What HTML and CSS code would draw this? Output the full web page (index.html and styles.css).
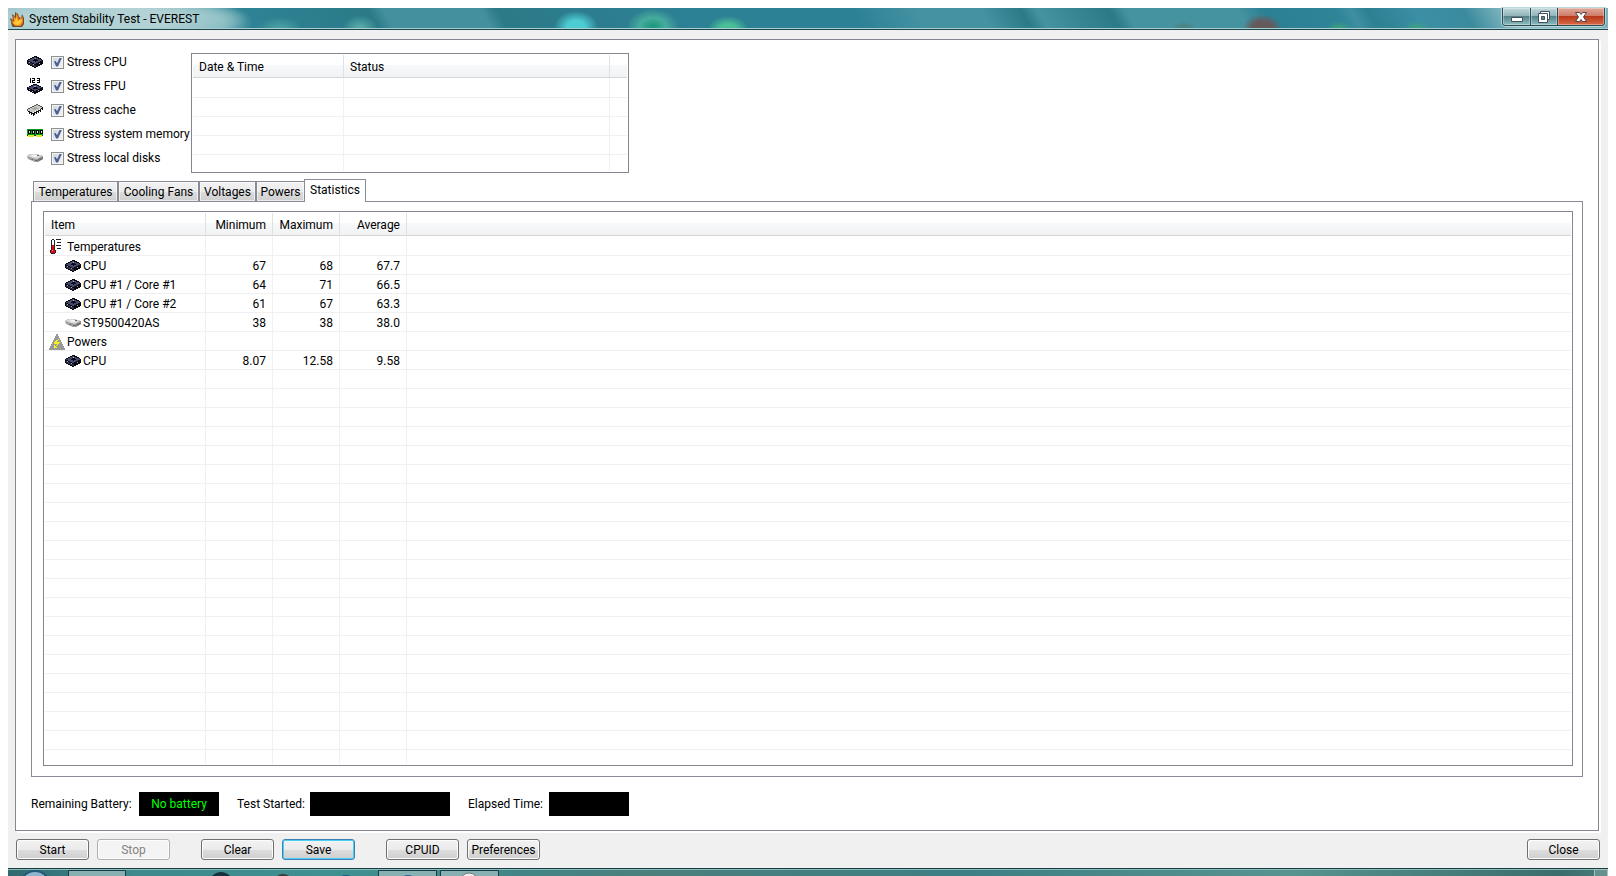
FILE: index.html
```
<!DOCTYPE html>
<html lang="en">
<head>
  <meta charset="UTF-8">
  <title>System Stability Test - EVEREST</title>
  <link rel="stylesheet" href="styles.css">
</head>
<body>

  <svg class="defs" aria-hidden="true">
    <symbol id="cpu" viewBox="0 0 16 16">
      <path fill="#08080e" d="M7 2h3v1h2v1h2v1h1v1h1v4h-1v1h-2v1h-2v1h-2v1H7v-1H5v-1H3v-1H1v-1H0V6h1V5h2V4h2V3h2z"/>
      <path fill="#46496e" d="M7 3h2v1h2v1h3v1h1v1h-2v1h-2v1H9v1H7V9H5V8H3V7H1V6h2V5h2V4h2z"/>
      <path fill="#2c2e4a" d="M1 8h2v1h2v1h2v1h2v2H7v-1H5v-1H3v-1H1z"/>
      <path fill="#08080e" d="M7 5h3v1h1v1H9v1H8V7H6V6h1z"/>
      <path fill="#a5a8c0" d="M8 4h1v1H8zM2 8h1v1H2zM6 10h1v1H6zM12 9h1v1h-1z"/>
    </symbol>
    <symbol id="fpu" viewBox="0 0 16 16">
      <path fill="#000" d="M3 0h1v5H3zM5 0h3v3H6v1h2v1H5V2h2V1H5zM10 0h3v5h-3V4h2V3h-2V2h2V1h-2z"/>
      <path fill="#08080e" d="M6 6h4v1h2v1h2v1h2v3h-1v1h-2v1h-2v1H9v1H7v-1H5v-1H3v-1H1v-1H0V9h2V8h2V7h2z"/>
      <path fill="#46496e" d="M6 7h4v1h2v1h3v1h-2v1h-2v1H9v1H7v-1H5v-1H3v-1H1V9h3V8h2z"/>
      <path fill="#08080e" d="M7 9h3v1h1v1H6v-1h1z"/>
      <path fill="#a5a8c0" d="M7 8h2v1H7zM2 11h1v1H2zM5 13h1v1H5zM11 12h1v1h-1z"/>
    </symbol>
    <symbol id="cache" viewBox="0 0 16 16">
      <path fill="#c8c8c4" d="M9 2h2v1h2v1h2v2h-1v1h-2v1h-2v1H8v1H6v1H4v-1H2V9H0V8h1V7h2V6h2V5h2V3h2z"/>
      <path fill="#555" d="M9 2h2v1H9zM7 3h2v1H7zM5 4h2v1H5zM3 5h2v1H3zM1 6h2v1H1zM0 7h1v2H0zM11 3h2v1h-2zM13 4h2v1h-2z"/>
      <path fill="#a8a8a4" d="M7 5h3v1h1v1H9v1H6V7H5V6h2z"/>
      <path fill="#111" d="M1 9h2v1h2v1h2v1H5v-1H3v-1H1zM7 10h1v3H7zM9 9h1v3H9zM11 8h1v3h-1zM13 7h1v3h-1zM15 5h1v3h-1zM4 11h1v2H4zM2 10h1v2H2zM6 12h1v2H6zM8 10h1v1H8zM10 9h1v1h-1zM12 8h1v1h-1zM14 6h1v1h-1z"/>
    </symbol>
    <symbol id="memory" viewBox="0 0 16 16">
      <path fill="#063f0b" d="M0 3h16v7H0z"/>
      <path fill="#0a9a20" d="M0 3h16v1H0zM0 4h1v5H0zM4 5h1v4H4zM8 5h1v4H8zM12 5h1v4h-1zM1 8h15v1H1z"/>
      <path fill="#030803" d="M1 4h3v4H1zM5 4h3v4H5zM9 4h3v4H9zM13 4h3v4h-3z"/>
      <path fill="#dbe5db" d="M2 5h1v2H2zM6 5h1v2H6zM10 5h1v2h-1zM14 5h1v2h-1z"/>
      <path fill="#e5e52a" d="M1 9h6v2H1zM9 9h6v2H9z"/>
    </symbol>
    <symbol id="disk" viewBox="0 0 16 16">
      <path fill="#a0a0a0" d="M0 6l3-2h6l7 2v3l-5 3H8L1 9z"/>
      <path fill="#d8d8d8" d="M0 6l4-2h4l7 2-5 3-4-1-3-1z"/>
      <path fill="#777" d="M11 9l5-2v2l-4 2-2 1z"/>
      <path fill="#f8f8f8" d="M4 6l3-1h3l1 1-3 1z"/>
      <path fill="#666" d="M4 9h2v1H5zM8 10h2v1H8zM13 9h1v1h-1zM10 5h2v1h-2z"/>
    </symbol>
    <symbol id="thermo" viewBox="0 0 16 16">
      <path fill="#222" d="M3 0h2v1h1v10h1v3H6v1H2v-1H1v-3h1V1h1z"/>
      <path fill="#fff" d="M3 1h2v5H3z"/>
      <path fill="#e00b12" d="M3 6h2v5h1v3H2v-3h1z"/>
      <path fill="#ff8b8b" d="M3 11h1v1H3z"/>
      <path fill="#222" d="M7 0h5v1H7zM8 3h4v1H8zM7 6h5v1H7zM8 9h4v1H8z"/>
    </symbol>
    <symbol id="power" viewBox="0 0 16 16">
      <path fill="#999" d="M7 0h2v2h1v2h1v2h1v2h1v2h1v2h1v2h1v2H0v-2h1v-2h1v-2h1V8h1V6h1V4h1V2h1z"/>
      <path fill="#f7f11c" d="M9 5h1v1H9v1H8v1h3v1h-1v1H9v1H8v1H7v1h1v1H5v-3h1v1h1v-1h1v-1H5V8h1V7h1V6h2z"/>
    </symbol>
    <symbol id="flame" viewBox="0 0 14 16">
      <path fill="#6d4a35" d="M0 7l3 2-1-6 3 2V1l3 2 1 3 2 1 1-4 2 4v6l-2 3-3 2H5l-3-3z"/>
      <path fill="#f07c14" d="M1 9l3 1-1-6 3 3V2l2 3 1 3 2-1 1-3 1 4v4l-2 3H5l-2-2z"/>
      <path fill="#ffc83a" d="M3 11l2 0-1-4 2 2V5l2 5 3-2 1 1-1 3-2 2H6l-2-1z"/>
    </symbol>
  </svg>

  <div class="window">
    <header class="titlebar">
      <svg class="app-icon"><use href="#flame"/></svg>
      <h1>System Stability Test - EVEREST</h1>
      <div class="window-buttons">
        <button class="minimize" type="button" aria-label="Minimize">
          <svg viewBox="0 0 12 12"><path fill="#fff" stroke="#45505c" d="M.5 6.500h11v4H.5z"/></svg>
        </button>
        <button class="restore" type="button" aria-label="Restore">
          <svg viewBox="0 0 12 12"><path fill="#fff" stroke="#45505c" d="M2.500.5h9v8h-9z"/><path fill="#fff" stroke="#45505c" d="M.5 2.500h9v9h-9z"/><path fill="#5c8b92" stroke="#45505c" d="M3.500 5.500h3v3h-3z"/></svg>
        </button>
        <button class="close" type="button" aria-label="Close window">
          <svg viewBox="0 0 12 12"><path fill="#fff" stroke="#4c454e" d="M.5 1.500h4L6 3.500l1.500-2h4L8.500 6l3 4.500h-4L6 8.500l-1.500 2h-4l3-4.500z"/></svg>
        </button>
      </div>
    </header>

    <main class="panel">
      <div class="top">
        <div class="stress">
          <label><svg class="icon"><use href="#cpu"/></svg><input type="checkbox" checked>Stress CPU</label>
          <label><svg class="icon"><use href="#fpu"/></svg><input type="checkbox" checked>Stress FPU</label>
          <label><svg class="icon"><use href="#cache"/></svg><input type="checkbox" checked>Stress cache</label>
          <label><svg class="icon"><use href="#memory"/></svg><input type="checkbox" checked>Stress system memory</label>
          <label><svg class="icon"><use href="#disk"/></svg><input type="checkbox" checked>Stress local disks</label>
        </div>
        <div class="list log">
          <table>
            <colgroup><col class="date"><col class="status"><col></colgroup>
            <thead><tr><th>Date &amp; Time</th><th>Status</th><th></th></tr></thead>
            <tbody><tr class="filler"><td></td><td></td><td></td></tr></tbody>
          </table>
        </div>
      </div>

      <div class="tabs" role="tablist">
        <button type="button" role="tab" class="tab-temperatures">Temperatures</button>
        <button type="button" role="tab" class="tab-fans">Cooling Fans</button>
        <button type="button" role="tab" class="tab-voltages">Voltages</button>
        <button type="button" role="tab" class="tab-powers">Powers</button>
        <button type="button" role="tab" class="tab-statistics active" aria-selected="true">Statistics</button>
      </div>

      <section class="pane">
        <div class="list stats">
          <table>
            <colgroup><col class="item"><col class="num"><col class="num"><col class="num"><col></colgroup>
            <thead>
              <tr><th>Item</th><th>Minimum</th><th>Maximum</th><th>Average</th><th></th></tr>
            </thead>
            <tbody>
              <tr class="group"><td><div><svg class="icon"><use href="#thermo"/></svg>Temperatures</div></td><td></td><td></td><td></td><td></td></tr>
              <tr><td><div><svg class="icon"><use href="#cpu"/></svg>CPU</div></td><td>67</td><td>68</td><td>67.7</td><td></td></tr>
              <tr><td><div><svg class="icon"><use href="#cpu"/></svg>CPU #1 / Core #1</div></td><td>64</td><td>71</td><td>66.5</td><td></td></tr>
              <tr><td><div><svg class="icon"><use href="#cpu"/></svg>CPU #1 / Core #2</div></td><td>61</td><td>67</td><td>63.3</td><td></td></tr>
              <tr><td><div><svg class="icon"><use href="#disk"/></svg>ST9500420AS</div></td><td>38</td><td>38</td><td>38.0</td><td></td></tr>
              <tr class="group"><td><div><svg class="icon"><use href="#power"/></svg>Powers</div></td><td></td><td></td><td></td><td></td></tr>
              <tr><td><div><svg class="icon"><use href="#cpu"/></svg>CPU</div></td><td>8.07</td><td>12.58</td><td>9.58</td><td></td></tr>
              <tr class="filler"><td></td><td></td><td></td><td></td><td></td></tr>
            </tbody>
          </table>
        </div>
      </section>

      <div class="readouts">
        <label class="battery" for="battery">Remaining Battery:</label><output id="battery">No battery</output>
        <label class="started" for="started">Test Started:</label><output id="started" class="wide"></output>
        <label class="elapsed" for="elapsed">Elapsed Time:</label><output id="elapsed"></output>
      </div>
    </main>

    <footer class="actions">
      <div class="pair">
        <button type="button">Start</button>
        <button type="button" disabled>Stop</button>
      </div>
      <div class="pair">
        <button type="button">Clear</button>
        <button type="button" class="default">Save</button>
      </div>
      <div class="pair">
        <button type="button">CPUID</button>
        <button type="button">Preferences</button>
      </div>
      <button type="button" class="end">Close</button>
    </footer>
  </div>

  <div class="taskbar">
    <svg class="task-items" viewBox="0 0 500 8" aria-hidden="true">
      <circle cx="27" cy="17" r="15" fill="#8fb5cb" stroke="#24577c" stroke-width="2"/>
      <path fill="#86b0b2" stroke="#173c43" d="M60.500 1.500h57v9h-57zM370.500 1.500h58v9h-58zM432.500 1.500h58v9h-58z"/>
      <path fill="#d0c573" d="M75 7h15v1H75z"/>
      <circle cx="213" cy="15" r="12" fill="#16333f"/>
      <circle cx="275" cy="15" r="10" fill="#3c3c3c"/>
      <circle cx="338" cy="16" r="10" fill="#16548e"/>
      <circle cx="400" cy="16" r="10" fill="#2b5f96"/>
      <circle cx="461" cy="13" r="9" fill="#eee" stroke="#777"/>
    </svg>
    <span class="show-desktop"></span>
  </div>

</body>
</html>
```

FILE: styles.css
```
* { box-sizing: border-box; }
body {
  display: flex;
  flex-direction: column;
  height: 100vh;
  margin: 0;
  padding: 8px 8px 0;
  background: #fff;
  color: #000;
  font: 12px/16px "Segoe UI", Roboto, sans-serif;
  overflow: hidden;
}
button { font: inherit; color: inherit; padding: 0; }
.defs { display: none; }
.icon { flex: none; width: 16px; height: 16px; }

.window {
  flex: 1;
  min-height: 0;
  display: flex;
  flex-direction: column;
  background: #f0f0f0;
}

/* title bar */
.titlebar {
  flex: none;
  display: flex;
  align-items: flex-start;
  height: 22px;
  padding-left: 2px;
  border-bottom: 1px solid #1d474d;
  box-shadow: inset 0 -1px #a6ced3;
  background:
    radial-gradient(ellipse 150px 24px at 90px 11px, #b3d2d5 50%, transparent),
    radial-gradient(ellipse 50px 20px at 195px 14px, #7fb9bf 40%, transparent),
    radial-gradient(ellipse 22px 12px at 17% 100%, #4fa7a6, transparent),
    radial-gradient(ellipse 18px 14px at 22% 100%, #5eb3ab, transparent),
    radial-gradient(ellipse 22px 16px at 35.5% 90%, #4dcbd2 40%, transparent),
    radial-gradient(ellipse 26px 18px at 40.3% 90%, #1f9a7e 10%, #46ac9d 50%, transparent),
    radial-gradient(ellipse 20px 13px at 45% 100%, #4abf96 40%, transparent),
    radial-gradient(ellipse 12px 8px at 73.5% 100%, #4f7a73, transparent),
    radial-gradient(ellipse 20px 15px at 78.4% 100%, #66595b 50%, transparent),
    radial-gradient(ellipse 13px 8px at 83.2% 100%, #3da77c, transparent),
    radial-gradient(ellipse 13px 8px at 88% 100%, #3da77c, transparent),
    linear-gradient(60deg, #8dbcc1 0, #8dbcc1 11%, #2f8395 15%, #2b7a88 23%, #44909f 24%, #44909f 30%, #2b7a88 31%, #2d8195 43%, #2d8195 53%, #4492a2 57%, #4492a2 61%, #2b7a88 63.5%, #4592a0 64.5%, #2b7a88 69%, #4592a0 70%, #4592a0 77%, #2c8094 78.5%, #2f8498 83%, #3e8fa0 84%, #2c8090 85%, #3c8fa4 88%, #3b8b9d 91%, #8fbfc6 94%, #7cb0b8);
}
.app-icon { width: 14px; height: 16px; margin-top: 3px; }
.titlebar h1 {
  margin: 3px 0 0 5px;
  font-size: 12px;
  font-weight: normal;
}
.window-buttons {
  display: flex;
  height: 18px;
  margin: 0 3px 0 auto;
  border: 1px solid #2c4b52;
  border-top: 0;
  border-radius: 0 0 4px 4px;
  box-shadow: 0 0 0 1px #b7d7da;
  overflow: hidden;
}
.window-buttons button {
  display: flex;
  align-items: center;
  justify-content: center;
  width: 28px;
  border: 0;
  border-right: 1px solid #2c4b52;
  background: linear-gradient(#c0d7da, #91b5ba 45%, #4f7e86 46%, #8ebdc1);
  box-shadow: inset 0 0 0 1px #ffffff55;
}
.window-buttons svg { width: 12px; height: 12px; }
.window-buttons .restore { width: 27px; }
.window-buttons .close {
  width: 46px;
  border-right: 0;
  background: linear-gradient(#dfa99b, #cf7d69 45%, #b53418 46%, #d96b45);
}

/* main panel */
.panel {
  flex: 1;
  min-height: 0;
  display: flex;
  flex-direction: column;
  margin: 9px 9px 0 7px;
  padding: 10px 15px 14px;
  border: 1px solid #828790;
  background: #fff;
  box-shadow: 2px 2px #fff;
}
.top { display: flex; margin-left: -4px; }
.stress { width: 164px; }
.stress label {
  display: flex;
  align-items: center;
  height: 24px;
  white-space: nowrap;
}
.stress input {
  appearance: none;
  flex: none;
  width: 13px;
  height: 13px;
  margin: 0 3px 0 8px;
  padding: 1px;
  border: 1px solid #8e8f8f;
  background: linear-gradient(135deg, #cfd4d9, #f4f4f4);
  box-shadow: inset 0 0 0 1px #f4f4f4;
}
.stress input:checked::after {
  content: "";
  display: block;
  width: 9px;
  height: 9px;
  background: #4a5f97;
  clip-path: polygon(10% 45%, 30% 40%, 45% 65%, 75% 0, 100% 0, 55% 100%, 35% 100%);
}

/* list views */
.list {
  padding: 1px;
  border: 1px solid #828790;
  background: #fff;
}
.list table {
  width: 100%;
  height: 100%;
  table-layout: fixed;
  border-spacing: 0;
}
.list th {
  height: 23px;
  padding: 2px 6px 0;
  border-right: 1px solid #e0e1e4;
  border-bottom: 1px solid #d5d5d5;
  background: linear-gradient(#fff 45%, #f7f8fa 46%, #f1f2f4);
  font-weight: normal;
  text-align: left;
}
.list td {
  height: 19px;
  padding: 2px 6px 0;
  border-right: 1px solid #f0f0f0;
  border-bottom: 1px solid #f0f0f0;
}
.list th:last-child, .list td:last-child { border-right: 0; }
.list tr:first-child td { height: 20px; vertical-align: bottom; }
.list .filler td {
  height: auto;
  border-bottom: 0;
  background: repeating-linear-gradient(transparent 0 18px, #f0f0f0 18px 19px);
}
.log { width: 438px; height: 120px; margin-top: 3px; }
.log .filler td { background-position: 0 1px; }
.log .date { width: 151px; }
.log .status { width: 266px; }
.stats { height: 100%; }
.stats .item { width: 161px; }
.stats .num { width: 67px; }
.stats th:not(:first-child), .stats td:not(:first-child) { text-align: right; }
.stats td:first-child { padding: 1px 0 0 20px; }
.stats .group td:first-child { padding-left: 4px; }
.stats td div {
  display: flex;
  align-items: center;
  gap: 2px;
  height: 17px;
  white-space: nowrap;
}

/* tabs */
.tabs {
  display: flex;
  align-items: flex-end;
  height: 23px;
  margin: 6px 0 -1px 2px;
}
.tabs button {
  height: 21px;
  border: 1px solid #898c95;
  background: linear-gradient(#f2f2f2, #ebebeb 50%, #dddddd 51%, #cfcfcf);
  box-shadow: inset 0 0 0 1px #ffffff99;
}
.tabs .tab-temperatures { width: 85px; }
.tabs .tab-fans { width: 81px; }
.tabs .tab-voltages { width: 57px; }
.tabs .tab-powers { width: 48px; border-right: 0; }
.tabs .tab-statistics { width: 62px; }
.tabs .active {
  z-index: 1;
  height: 23px;
  padding-bottom: 2px;
  border-bottom: 0;
  background: #fff;
  box-shadow: none;
}
.pane {
  flex: 1;
  min-height: 0;
  padding: 9px 9px 10px 11px;
  border: 1px solid #898c95;
}

/* readouts */
.readouts {
  display: flex;
  align-items: center;
  margin-top: 15px;
  line-height: 24px;
  white-space: nowrap;
}
.readouts .battery { width: 108px; }
.readouts .started { width: 73px; }
.readouts .elapsed { width: 81px; }
.readouts output {
  width: 80px;
  height: 24px;
  margin-right: 18px;
  background: #000;
  color: #0f0;
  text-align: center;
}
.readouts .wide { width: 140px; }

/* bottom buttons */
.actions {
  display: flex;
  gap: 31px;
  padding: 8px;
}
.actions .pair { display: flex; gap: 8px; }
.actions button {
  width: 73px;
  height: 21px;
  border: 1px solid #707070;
  border-radius: 3px;
  background: linear-gradient(#f2f2f2, #ebebeb 50%, #dddddd 51%, #cfcfcf);
  box-shadow: inset 0 0 0 1px #fcfcfc;
  line-height: 18px;
}
.actions button:disabled {
  border-color: #adb2b5;
  background: #f4f4f4;
  color: #838383;
}
.actions .default {
  border-color: #3c7fb1;
  box-shadow: inset 0 0 0 1px #48d1f5;
}
.actions .end { margin-left: auto; }

.taskbar {
  flex: none;
  display: flex;
  justify-content: space-between;
  height: 8px;
  border-top: 1px solid #173c43;
  background: linear-gradient(90deg, #2f6a70, #3e8a8c 8%, #3f9090 20%, #438587 32%, #4b7f7c 40%, #3d7f84 60%, #579490 80%, #3b6d6c 97%, #4a7c7a);
  box-shadow: inset 0 1px #8dbcbc;
}
.task-items { width: 500px; height: 8px; }
.show-desktop {
  width: 14px;
  border: 1px solid #a5c4c2;
  border-bottom: 0;
  background: #64918d;
}
```
